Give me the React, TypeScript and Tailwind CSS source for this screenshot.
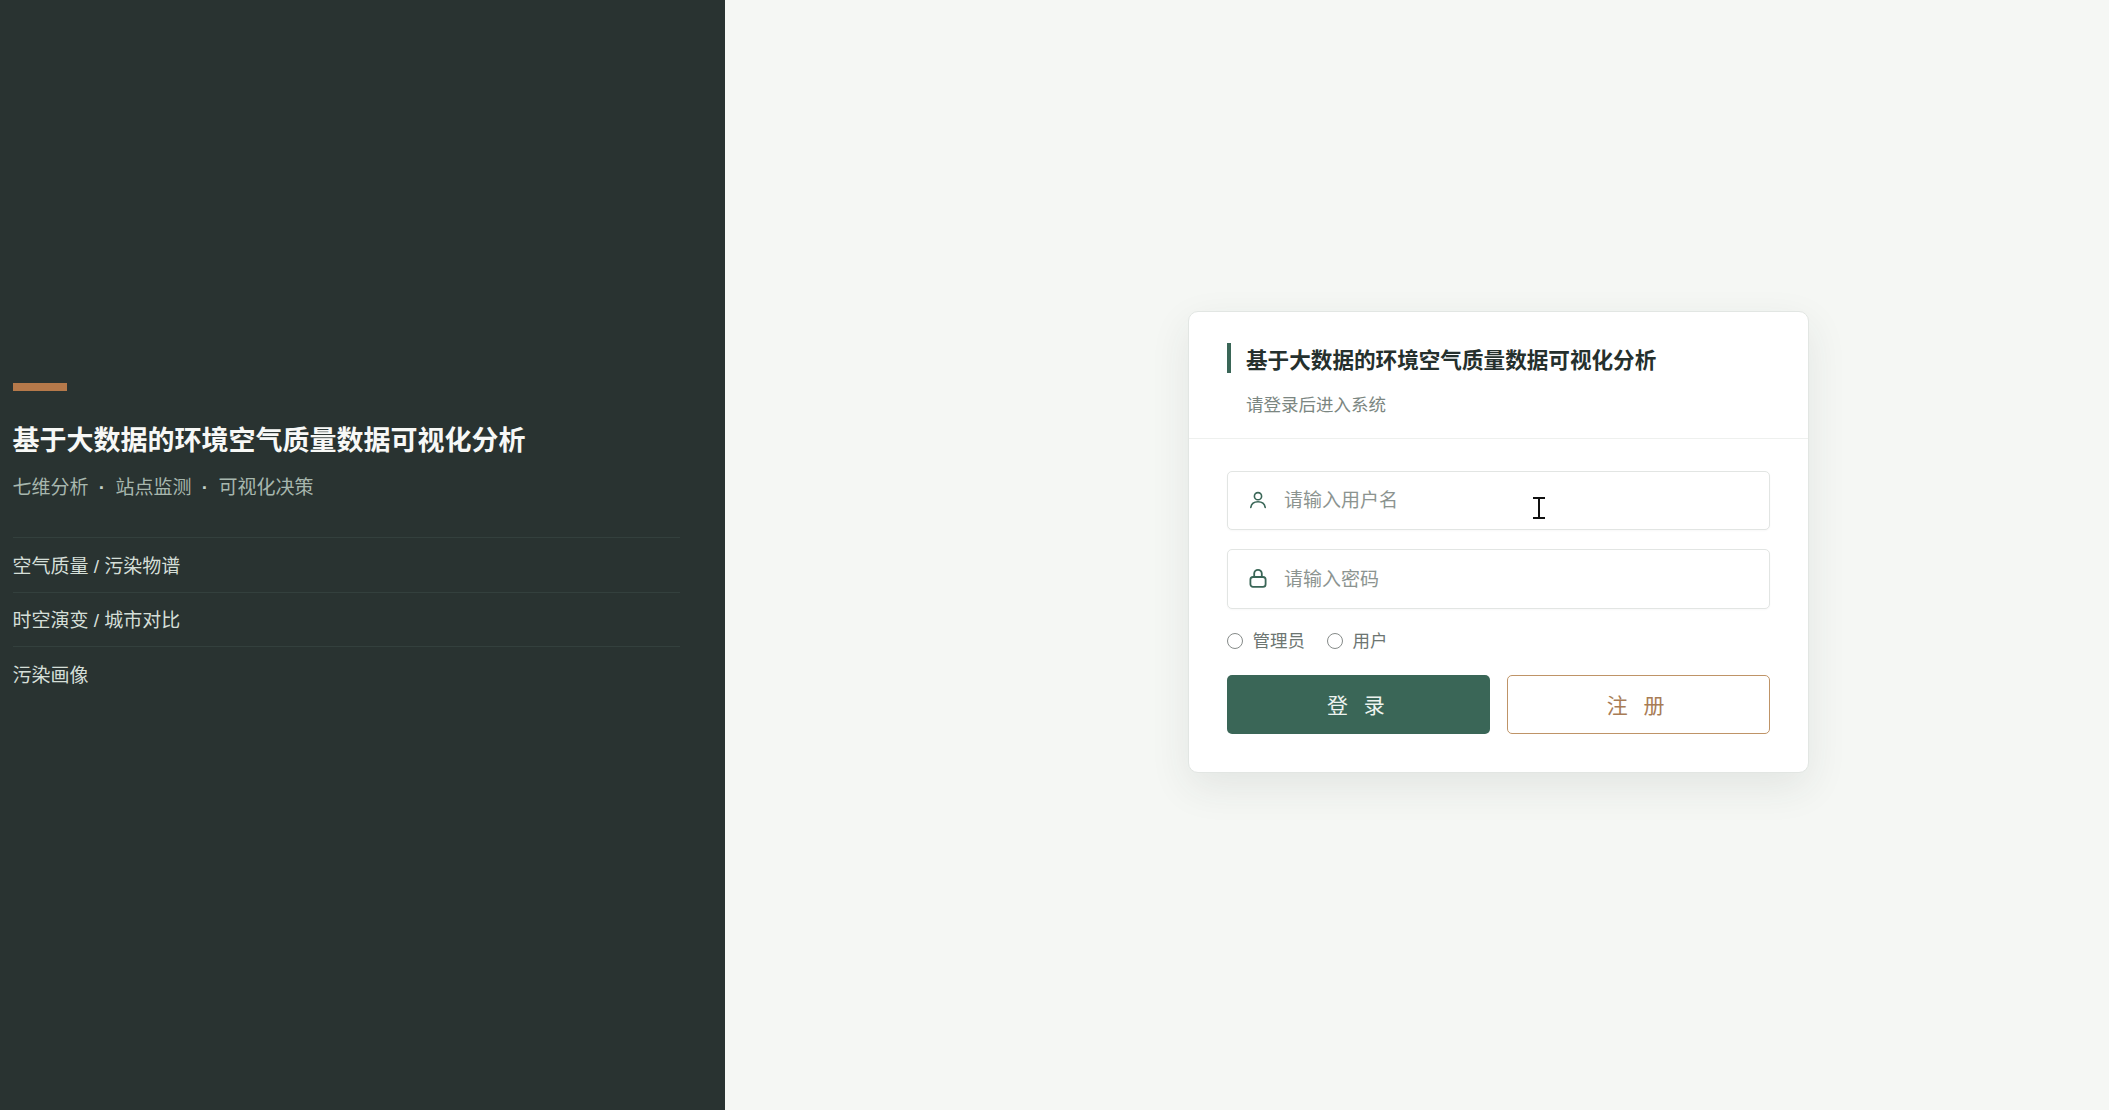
const font = "[font-family:'Liberation_Sans','Noto_Sans_CJK_SC',sans-serif]";

const features = ["空气质量 / 污染物谱", "时空演变 / 城市对比", "污染画像"];

function UserIcon() {
  return (
    <svg width="18" height="18" viewBox="0 0 18 18" fill="none" stroke="#3a6657" strokeWidth="1.6" strokeLinecap="round">
      <circle cx="9" cy="5.2" r="3.6" />
      <path d="M1.8 16.4c.6-3.6 3.4-5.6 7.2-5.6s6.6 2 7.2 5.6" />
    </svg>
  );
}

function LockIcon() {
  return (
    <svg className="mb-[2px]" width="18" height="20" viewBox="0 0 18 20" fill="none" stroke="#3a6657" strokeWidth="1.8" strokeLinecap="round">
      <rect x="1.4" y="9" width="15.2" height="9.8" rx="2.6" />
      <path d="M5.2 8.8V5.6a3.8 3.8 0 0 1 7.6 0v3.2" />
    </svg>
  );
}

function Field({ icon, placeholder, type }: { icon: React.ReactNode; placeholder: string; type: string }) {
  return (
    <div className="flex h-[59.5px] items-center rounded-[5px] border border-[#e2e5e3] bg-white pl-[21px] pr-4 shadow-[0_1px_2px_rgba(0,0,0,0.03)]">
      <span className="flex w-[35px] shrink-0">{icon}</span>
      <input
        type={type}
        placeholder={placeholder}
        className="w-full bg-transparent pt-[2px] text-[19px] text-[#2b3431] outline-none placeholder:text-[#8c9490]"
      />
    </div>
  );
}

function Role({ label }: { label: string }) {
  return (
    <label className="flex items-center gap-[9.5px]">
      <input
        type="radio"
        name="role"
        className="h-4 w-4 appearance-none rounded-full border-[1.6px] border-[#868b89] bg-white"
      />
      <span className="pt-[1px] text-[17.5px] text-[#6d7672]">{label}</span>
    </label>
  );
}

function Dot() {
  return <span className="inline-block w-[27px] text-center font-bold text-[#c3d0c8]">·</span>;
}

export default function App() {
  return (
    <div className={`relative flex h-[1110px] w-full overflow-hidden bg-[#f5f7f4] ${font}`}>
      <aside className="flex w-[725px] shrink-0 flex-col bg-[#293331] pl-[12.5px] pr-[45px] pt-[383px]">
        <div className="h-2 w-[54px] bg-[#b5794a]" />
        <h1 className="mt-[31.5px] text-[27px] font-bold leading-[36px] text-[#f7f8f6]">
          基于大数据的环境空气质量数据可视化分析
        </h1>
        <p className="mt-[16px] text-[19px] leading-[26px] text-[#a7b7ae]">
          七维分析<Dot />站点监测<Dot />可视化决策
        </p>
        <ul className="mt-[36.5px]">
          {features.map((item) => (
            <li key={item} className="flex h-[54.67px] items-center border-t border-[#33403d] pt-[4px] text-[19px] text-[#d5dfd8]">
              {item}
            </li>
          ))}
        </ul>
      </aside>

      <main className="flex flex-1 items-center justify-center pb-[26px] pl-[162.5px]">
        <div className="w-[620.5px] rounded-[10px] border border-[#e2e6e3] bg-white shadow-[0_14px_40px_rgba(40,60,50,0.09)]">
          <header className="border-b border-[#eef0ee] pb-[21px] pl-[37.5px] pt-[31px]">
            <h2 className="h-[30px] border-l-4 border-[#3a6657] pl-[15.5px] pt-[3px] text-[21.6px] font-bold leading-[30px] text-[#25302d]">
              基于大数据的环境空气质量数据可视化分析
            </h2>
            <p className="mt-[19.5px] pl-[19.5px] text-[17.5px] leading-[24px] text-[#7b8681]">请登录后进入系统</p>
          </header>
          <form className="flex flex-col pb-[38px] pl-[38px] pr-[38px] pt-[32px]">
            <Field icon={<UserIcon />} placeholder="请输入用户名" type="text" />
            <div className="mt-[19px]">
              <Field icon={<LockIcon />} placeholder="请输入密码" type="password" />
            </div>
            <div className="mt-[19px] flex h-[26px] items-center gap-[22px]">
              <Role label="管理员" />
              <Role label="用户" />
            </div>
            <div className="mt-[21.5px] grid grid-cols-2 gap-[17px]">
              <button type="button" className="h-[59px] rounded-[5px] bg-[#3a6657] pt-[2px] text-[21px] tracking-[5px] text-[#edf3ef]">
                登 录
              </button>
              <button type="button" className="h-[59px] rounded-[5px] border border-[#bf9467] bg-white pt-[2px] text-[21px] tracking-[5px] text-[#a87c55]">
                注 册
              </button>
            </div>
          </form>
        </div>
      </main>

      {/* mouse cursor caught in the screenshot */}
      <svg className="absolute left-[1532px] top-[496px]" width="14" height="24" viewBox="0 0 14 24" fill="none" stroke="#111" strokeWidth="2">
        <path d="M1 2h12M7 2v20M1 22h12" />
      </svg>
    </div>
  );
}
